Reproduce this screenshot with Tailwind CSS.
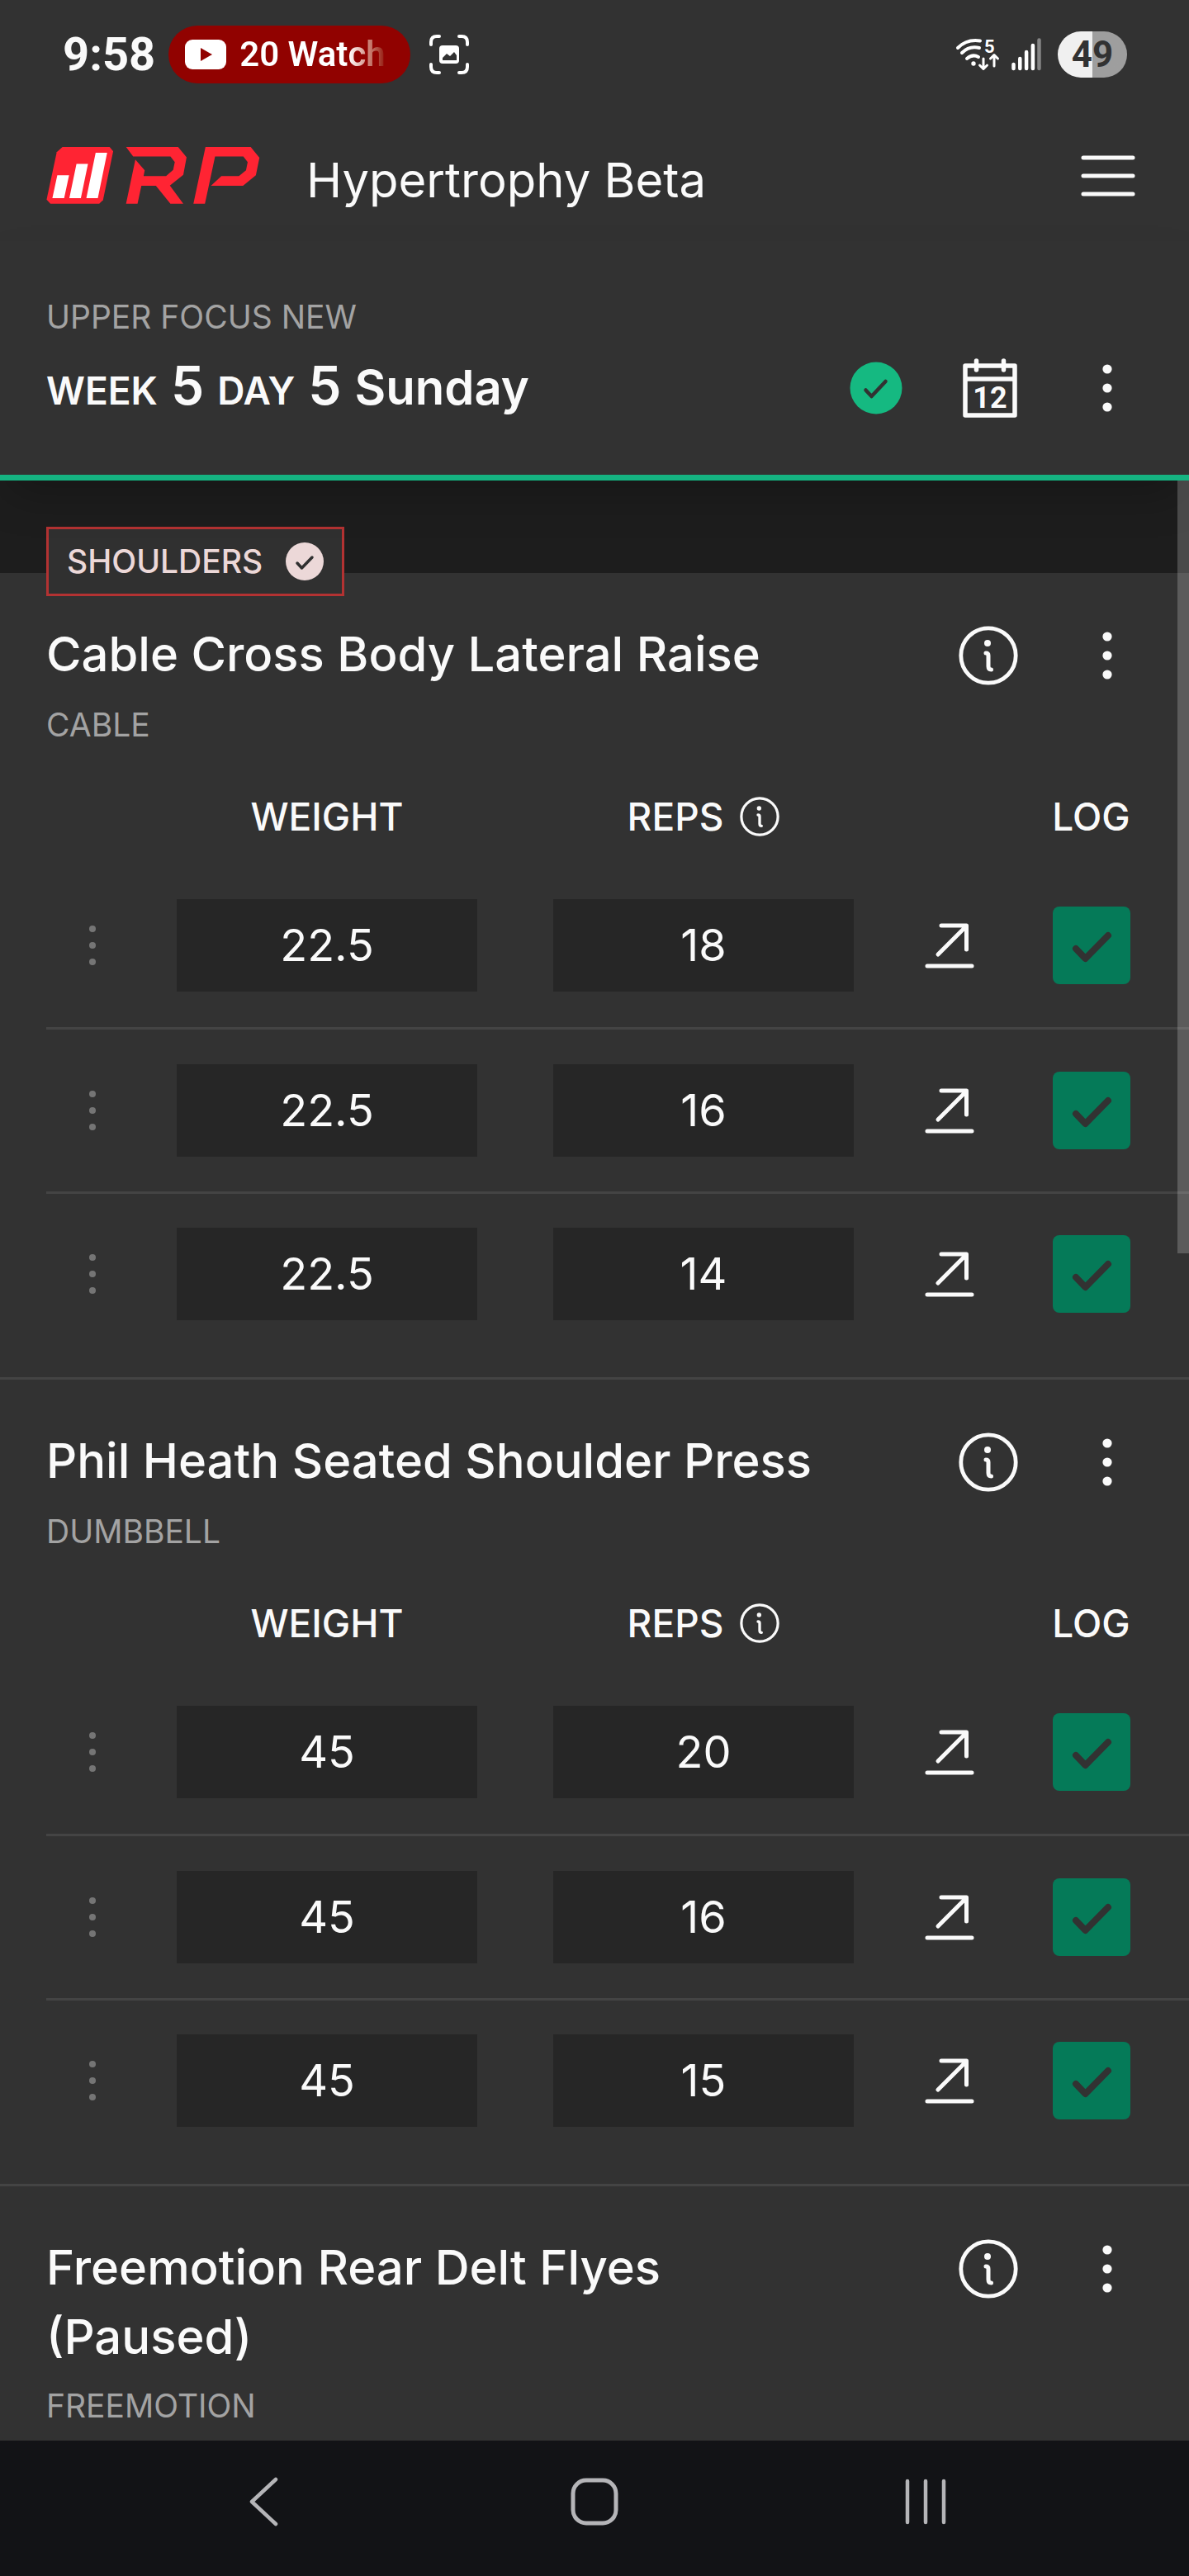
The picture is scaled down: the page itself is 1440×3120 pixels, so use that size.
<!DOCTYPE html>
<html lang="en">
<head>
    <meta charset="UTF-8">
    <meta name="viewport" content="width=device-width, initial-scale=1.0">
    <title>Hypertrophy Beta</title>
    <script src="https://cdn.jsdelivr.net/npm/@tailwindcss/browser@4"></script>
</head>
<body class="flex min-h-screen flex-col bg-[#323232] font-['Inter',sans-serif] text-[#fafafa]">

    <!-- shared icons -->
    <svg class="hidden">
        <symbol id="dots" viewBox="0 0 60 60">
            <circle cx="30" cy="7" r="5.6" fill="currentColor"/>
            <circle cx="30" cy="30" r="5.6" fill="currentColor"/>
            <circle cx="30" cy="53" r="5.6" fill="currentColor"/>
        </symbol>
        <symbol id="info" viewBox="0 0 72 72" fill="none" stroke="currentColor" stroke-linecap="round" stroke-linejoin="round">
            <circle cx="36" cy="36" r="33.2" stroke-width="4.8"/>
            <circle cx="35" cy="21" r="4" fill="currentColor" stroke="none"/>
            <path d="M33 33 Q36 33 36 36 V49 Q36 53 39.5 53" stroke-width="5"/>
        </symbol>
        <symbol id="arrow" viewBox="0 0 60 56" fill="none" stroke="currentColor" stroke-width="5" stroke-linecap="round" stroke-linejoin="round">
            <path d="M3 53 H57 M16 39 L50 5 M20 4 H50.5 V33"/>
        </symbol>
    </svg>

    <!-- phone status bar -->
    <div class="flex h-[132px] items-center justify-between pr-[75px] pl-19 font-[Roboto,sans-serif]">
        <div class="flex items-center">
            <span class="text-[56px] leading-none font-bold">9:58</span>
            <div class="ml-4 flex h-[70px] items-center gap-4 rounded-full bg-[#910200] pr-[30px] pl-5">
                <svg class="h-9 w-[50px]" viewBox="0 0 50 36">
                    <rect width="50" height="36" rx="9" fill="#fff"/>
                    <path d="M19 10 L33 18 L19 26 Z" fill="#910200"/>
                </svg>
                <span class="bg-linear-to-r from-white from-75% to-[#910200] bg-clip-text text-[42px] leading-none font-semibold text-transparent">20 Watch</span>
            </div>
            <svg class="ml-[22px] size-[50px]" viewBox="0 0 50 50" fill="none" stroke="#fff" stroke-width="4" stroke-linecap="round">
                <path d="M3 13 V10 Q3 3 10 3 H13 M37 3 H40 Q47 3 47 10 V13 M47 37 V40 Q47 47 40 47 H37 M13 47 H10 Q3 47 3 40 V37"/>
                <rect x="13" y="14" width="24" height="22" rx="4" fill="#fff" stroke="none"/>
                <path d="M17 32 V29 L22 24 L26 27 L31 22 L34 26 V32 Z" fill="#323232" stroke="none"/>
            </svg>
        </div>
        <div class="flex items-center">
            <svg class="h-10 w-14 overflow-visible" viewBox="0 0 56 40" fill="none" stroke="#fff" stroke-linecap="round">
                <path d="M3 12 Q14 1 30 3.5 M8 18 Q17 9 29 12 M14 25 Q21 19 28 23" stroke-width="4"/>
                <circle cx="22" cy="31" r="2.7" fill="#fff" stroke="none"/>
                <path d="M34 25 V37 M29.5 33 L34 37.5 L38.5 33 M47 34 V22 M42.5 25 L47 20.5 L51.5 25" stroke-width="3" stroke-linejoin="round"/>
                <text x="35" y="18" font-size="22" font-weight="700" fill="#fff" stroke="none">5</text>
            </svg>
            <svg class="ml-3 h-10 w-9" viewBox="0 0 36 40" stroke="#fff" stroke-width="4.5" stroke-linecap="round">
                <path d="M2.5 32 V37 M10.3 25 V37 M18.1 17 V37 M25.9 9 V37"/>
                <path d="M33.5 2.5 V37" stroke="#858585"/>
            </svg>
            <div class="ml-5 flex h-14 w-21 items-center justify-center rounded-full bg-linear-to-r from-[#f0f0f0] from-50% to-[#9e9e9e] to-50% text-[44px] leading-none font-bold text-[#323232]">49</div>
        </div>
    </div>

    <!-- app bar -->
    <header class="flex h-[160px] items-center px-14">
        <svg class="h-[69px] w-[259px] shrink-0" viewBox="48 38 778 208" role="img" aria-label="RP">
            <path d="M106 38 H278 L291 54 L254 232 L240 245 H62 L48 230 L85 57 Z" fill="#ff2433"/>
            <path d="M87 141 H130 L112 225 H69 Z M157 100 H199 L173 225 H131 Z M227 59 H269 L235 225 H193 Z" fill="#fff"/>
            <path d="M338 38 H528 L559 76 L547 140 L498 179 L547 245 H500 L447 180 H394 L380 245 H338 L372 84 L406 123 L402 144 H484 L510 122 L516 93 L500 73 H364 Z" fill="#ff2433"/>
            <path d="M628 38 H793 L825 77 L812 141 L765 180 H648 L686 144 H750 L776 123 L782 93 L766 73 H663 L626 245 H584 Z" fill="#ff2433"/>
        </svg>
        <h1 class="flex-1 pt-3 pl-14 text-[58px] leading-none">Hypertrophy Beta</h1>
        <button type="button" aria-label="Menu" class="px-2">
            <svg class="h-[54px] w-[68px]" viewBox="0 0 68 54" stroke="currentColor" stroke-width="5" stroke-linecap="round">
                <path d="M4 6 H64 M4 28 H64 M4 50 H64"/>
            </svg>
        </button>
    </header>

    <!-- current workout -->
    <section class="relative z-10 border-b-[7px] border-[#15b381] pt-[62px] pr-[69px] pb-[63px] pl-14 shadow-2xl">
        <p class="text-[39px] leading-[60px] text-[#a3a3a3]">UPPER FOCUS NEW</p>
        <div class="mt-3.5 flex h-[84px] items-center">
            <h2 class="flex flex-1 items-baseline gap-4 text-[58px] leading-[84px] font-semibold">
                <span class="text-[46px]">WEEK</span>
                <span class="text-[64px]">5</span>
                <span class="text-[46px]">DAY</span>
                <span class="text-[64px]">5</span>
                <span>Sunday</span>
            </h2>
            <svg class="size-16" viewBox="0 0 64 64" role="img" aria-label="Completed">
                <circle cx="32" cy="32" r="31.5" fill="#15b981"/>
                <path d="M19.5 34.5 L26.5 42 L43.5 24" fill="none" stroke="#323232" stroke-width="4.5" stroke-linecap="round" stroke-linejoin="round"/>
            </svg>
            <button type="button" aria-label="Calendar" class="ml-18">
                <svg class="h-[72px] w-[68px]" viewBox="0 0 68 72" fill="none" stroke="currentColor" stroke-width="5.5" stroke-linecap="round" stroke-linejoin="round">
                    <path d="M4 9 H64 V69 H4 Z M4 25 H64 M17.5 3 V14 M50.5 3 V14"/>
                    <text x="34" y="60" font-size="36" font-weight="700" font-family="Roboto" text-anchor="middle" fill="currentColor" stroke="none">12</text>
                </svg>
            </button>
            <button type="button" aria-label="Workout menu" class="ml-[78px]">
                <svg class="size-[60px]"><use href="#dots"/></svg>
            </button>
        </div>
    </section>

    <main class="relative flex-1">
        <div class="h-28 bg-[#1d1d1d] px-14 pt-14">
            <div class="inline-flex h-[84px] items-center gap-7 border-3 border-[#b33232] bg-[#303030] px-[22px] text-[39px] font-medium text-[#ecd8d8]">
                SHOULDERS
                <svg class="size-[46px]" viewBox="0 0 46 46">
                    <circle cx="23" cy="23" r="23" fill="#ecd8d8"/>
                    <path d="M14 25 L19.5 31 L32 18" fill="none" stroke="#303030" stroke-width="3.5" stroke-linecap="round" stroke-linejoin="round"/>
                </svg>
            </div>
        </div>
        <div id="exercises"></div>

        <!-- scroll thumb -->
        <div class="absolute top-0 right-0 z-20 h-[936px] w-3.5 bg-white/20"></div>
    </main>

    <!-- system navigation -->
    <nav class="grid h-[164px] grid-cols-3 items-center justify-items-center bg-[#121316] px-[118px] pb-4 text-[#b5b5b8]">
        <button type="button" aria-label="Back" class="p-5">
            <svg class="h-[60px] w-9" viewBox="0 0 36 60" fill="none" stroke="currentColor" stroke-width="4.5" stroke-linecap="round" stroke-linejoin="round"><path d="M33 3 L4 30 L33 57"/></svg>
        </button>
        <button type="button" aria-label="Home" class="p-5">
            <svg class="size-[58px]" viewBox="0 0 58 58" fill="none" stroke="currentColor" stroke-width="5"><rect x="3" y="3" width="52" height="52" rx="16"/></svg>
        </button>
        <button type="button" aria-label="Recents" class="p-5">
            <svg class="h-14 w-[50px]" viewBox="0 0 50 56" stroke="currentColor" stroke-width="4.5" stroke-linecap="round"><path d="M3 3 V53 M25 3 V53 M47 3 V53"/></svg>
        </button>
    </nav>

    <script>
        const exercises = [
            { name: 'Cable Cross Body Lateral Raise', type: 'CABLE', sets: [[22.5, 18], [22.5, 16], [22.5, 14]] },
            { name: 'Phil Heath Seated Shoulder Press', type: 'DUMBBELL', sets: [[45, 20], [45, 16], [45, 15]] },
            { name: 'Freemotion Rear Delt Flyes (Paused)', type: 'FREEMOTION', sets: [] },
        ];

        const field = (label, value) => `
            <td class="px-[46px]">
                <input type="text" inputmode="decimal" aria-label="${label}" value="${value}" class="block h-28 w-full bg-[#262626] text-center text-[54px]">
            </td>`;

        const setRow = ([weight, reps], i) => `
            <tr class="h-[199px] border-b-3 border-[#444444] last:h-[196px] last:border-0">
                <td class="text-center">
                    <button type="button" aria-label="Set ${i + 1} menu" class="block w-full text-[#757575]">
                        <svg class="mx-auto h-[50px] w-4" viewBox="0 0 16 50" fill="currentColor"><circle cx="8" cy="5" r="4"/><circle cx="8" cy="25" r="4"/><circle cx="8" cy="45" r="4"/></svg>
                    </button>
                </td>
                ${field('Weight, set ' + (i + 1), weight)}
                ${field('Reps, set ' + (i + 1), reps)}
                <td>
                    <button type="button" aria-label="Copy down" class="mx-auto block">
                        <svg class="h-14 w-15"><use href="#arrow"/></svg>
                    </button>
                </td>
                <td class="pr-4">
                    <div class="relative mx-auto size-[94px]">
                        <input type="checkbox" checked aria-label="Log set ${i + 1}" class="block size-full appearance-none rounded-lg bg-[#057a58]">
                        <svg class="pointer-events-none absolute inset-0 size-full" viewBox="0 0 94 94" fill="none" stroke="#323232" stroke-width="8" stroke-linecap="round" stroke-linejoin="round"><path d="M28 51 L39.5 63 L67 35"/></svg>
                    </div>
                </td>
            </tr>`;

        const setTable = (sets) => `
            <table class="mt-12 mb-7 w-full table-fixed border-collapse">
                <thead>
                    <tr class="h-[90px] text-[46px] leading-none">
                        <th class="w-28"></th>
                        <th class="pb-6 font-medium">WEIGHT</th>
                        <th class="pb-6 font-medium">
                            <div class="flex items-center justify-center gap-5">REPS
                                <button type="button" aria-label="About reps"><svg class="size-12"><use href="#info"/></svg></button>
                            </div>
                        </th>
                        <th class="w-[139px]"></th>
                        <th class="w-[221px] pr-4 pb-6 font-medium">LOG</th>
                    </tr>
                </thead>
                <tbody>${sets.map(setRow).join('')}</tbody>
            </table>`;

        document.getElementById('exercises').innerHTML = exercises.map((ex) => `
            <section class="border-b-3 border-[#444444] pt-14 pl-14 last:border-0">
                <div class="flex min-h-[86px] items-start pr-[69px]">
                    <div class="flex-1"><h3 class="max-w-[960px] text-[58px] leading-[84px] font-medium">${ex.name}</h3></div>
                    <button type="button" aria-label="Exercise info" class="mt-2">
                        <svg class="size-18"><use href="#info"/></svg>
                    </button>
                    <button type="button" aria-label="Exercise menu" class="mt-3.5 ml-[78px]">
                        <svg class="size-[60px]"><use href="#dots"/></svg>
                    </button>
                </div>
                <p class="mt-3 text-[39px] leading-[60px] text-[#a3a3a3]">${ex.type}</p>
                ${ex.sets.length ? setTable(ex.sets) : ''}
            </section>`).join('');
    </script>

</body>
</html>
